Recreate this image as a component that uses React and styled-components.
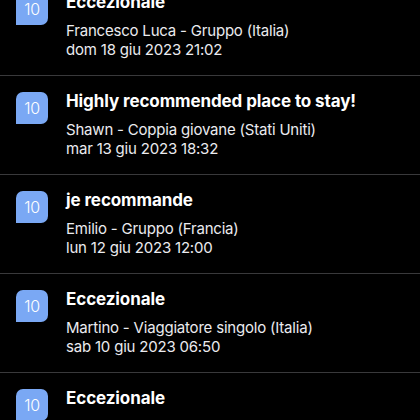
import React from "react";
import styled, { createGlobalStyle } from "styled-components";

const Global = createGlobalStyle`
  html, body { margin: 0; padding: 0; background: #000; }
  body { font-family: Inter, "Noto Sans", sans-serif; -webkit-font-smoothing: antialiased; overflow: hidden; }
`;

const List = styled.div`
  margin-top: -23px;
  display: flex;
  flex-direction: column;
  background: #000;
`;

const Row = styled.div`
  display: flex;
  gap: 18px;
  padding: 14px 16px 16px 16px;
  border-bottom: 1px solid #39393b;
`;

const Badge = styled.div`
  flex: 0 0 32px;
  width: 32px;
  height: 32px;
  margin-top: 2px;
  background: #7aa8f4;
  border-radius: 7px 7px 7px 0;
  color: #fff;
  font-size: 16px;
  font-weight: 300;
  display: flex;
  align-items: center;
  justify-content: center;
  letter-spacing: -0.3px;
`;

const Body = styled.div`
  display: flex;
  flex-direction: column;
  min-width: 0;
`;

const Title = styled.div`
  color: #fff;
  font-size: 17px;
  font-weight: 700;
  line-height: 22px;
  margin-bottom: 8px;
  white-space: nowrap;
  letter-spacing: -0.1px;
`;

const Meta = styled.div`
  color: #ebebef;
  font-size: 15px;
  line-height: 19px;
  white-space: nowrap;
  letter-spacing: -0.2px;
`;

const reviews = [
  { title: "Eccezionale", who: "Francesco Luca - Gruppo (Italia)", date: "dom 18 giu 2023 21:02" },
  { title: "Highly recommended place to stay!", who: "Shawn - Coppia giovane (Stati Uniti)", date: "mar 13 giu 2023 18:32" },
  { title: "je recommande", who: "Emilio - Gruppo (Francia)", date: "lun 12 giu 2023 12:00" },
  { title: "Eccezionale", who: "Martino - Viaggiatore singolo (Italia)", date: "sab 10 giu 2023 06:50" },
  { title: "Eccezionale", who: "", date: "" },
];

export default function App() {
  return (
    <>
      <Global />
      <List>
        {reviews.map((r, i) => (
          <Row key={i}>
            <Badge>10</Badge>
            <Body>
              <Title>{r.title}</Title>
              <Meta>{r.who || "\u00a0"}</Meta>
              <Meta>{r.date || "\u00a0"}</Meta>
            </Body>
          </Row>
        ))}
      </List>
    </>
  );
}
